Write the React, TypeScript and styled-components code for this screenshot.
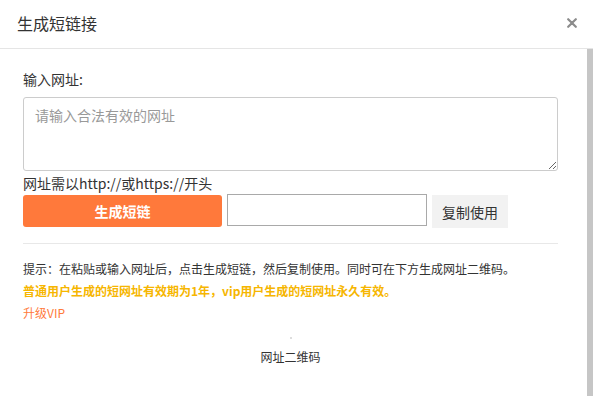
import styled, { createGlobalStyle } from "styled-components"

const GlobalStyle = createGlobalStyle`
  html, body {
    margin: 0;
    padding: 0;
    background: #fff;
    overflow: hidden;
  }
  body {
    font-family: "Noto Sans CJK SC", "Noto Sans", "Liberation Sans", sans-serif;
    color: #333;
  }
  * {
    box-sizing: border-box;
  }
`

const ModalWrapper = styled.div`
  width: 100vw;
  height: 100vh;
  background-color: #fff;
  display: flex;
  flex-direction: column;
  overflow: hidden;
`

const ModalHeader = styled.div`
  height: 49px;
  flex-shrink: 0;
  display: flex;
  align-items: center;
  justify-content: space-between;
  padding: 0 15px 2px 17px;
  border-bottom: 1px solid #e5e5e5;
`

const Title = styled.h3`
  margin: 0;
  font-size: 16px;
  font-weight: normal;
  color: #333;
`

const CloseButton = styled.button`
  width: 12px;
  height: 12px;
  padding: 0;
  border: none;
  background: none;
  cursor: pointer;
  display: flex;
  align-items: center;
  justify-content: center;
`

const BodyFrame = styled.div`
  flex: 1;
  min-height: 0;
  display: grid;
  grid-template-columns: 1fr 6px;
`

const ModalBody = styled.div`
  overflow: hidden;
  padding: 20px 29px 0 23px;
`

const ScrollThumb = styled.div`
  height: 100%;
  background-color: #c6c6c6;
`

const Label = styled.div`
  font-size: 14px;
  line-height: 20px;
  color: #333;
`

const UrlTextarea = styled.textarea`
  display: block;
  width: 100%;
  height: 74px;
  margin: 8px 0 2px;
  padding: 7px 11px;
  border: 1px solid #ccc;
  border-radius: 3px;
  font-family: inherit;
  font-size: 14px;
  line-height: 20px;
  color: #333;
  outline: none;

  &::placeholder {
    color: #999;
  }
`

const ActionRow = styled.div`
  display: flex;
  align-items: flex-start;
  gap: 5px;
  margin-top: 1px;
`

const GenerateButton = styled.button`
  width: 199px;
  height: 32px;
  margin-top: 1px;
  border: none;
  border-radius: 3px;
  background-color: #ff793b;
  color: #fff;
  font-family: inherit;
  font-size: 14px;
  font-weight: bold;
  cursor: pointer;
`

const ResultInput = styled.input`
  width: 200px;
  height: 32px;
  border: 1px solid #a9a9a9;
  padding: 0 6px;
  font-family: inherit;
  font-size: 13px;
  outline: none;
`

const CopyButton = styled.button`
  width: 76px;
  height: 33px;
  margin-top: 1px;
  border: none;
  background-color: #f2f2f2;
  color: #333;
  font-family: inherit;
  font-size: 14px;
  cursor: pointer;
`

const Divider = styled.div`
  height: 1px;
  margin: 15px 0 14px;
  background-color: #e8e8e8;
`

const Tip = styled.p<{ tone?: "normal" | "warn" | "vip" }>`
  margin: 0;
  font-size: 12px;
  line-height: 22px;
  color: ${(props) =>
    props.tone === "warn" ? "#f6b600" : props.tone === "vip" ? "#ff7a3b" : "#333"};
  font-weight: ${(props) => (props.tone === "warn" ? "bold" : "normal")};
`

const QrBox = styled.div`
  display: flex;
  flex-direction: column;
  align-items: center;
  margin-top: 13px;
`

const QrImage = styled.div`
  width: 2px;
  height: 2px;
  background-color: #ddd;
`

const QrCaption = styled.div`
  margin-top: 8px;
  font-size: 12px;
  line-height: 20px;
  color: #333;
`

const App = () => {
  return (
    <>
      <GlobalStyle />
      <ModalWrapper>
        <ModalHeader>
          <Title>生成短链接</Title>
          <CloseButton aria-label="关闭">
            <svg width="10" height="10" viewBox="0 0 10 10">
              <path d="M1.2 1.2 L8.8 8.8 M8.8 1.2 L1.2 8.8" stroke="#8c8c8c" strokeWidth="2.2" strokeLinecap="round" />
            </svg>
          </CloseButton>
        </ModalHeader>
        <BodyFrame>
          <ModalBody>
            <Label>输入网址:</Label>
            <UrlTextarea placeholder="请输入合法有效的网址" />
            <Label>网址需以http://或https://开头</Label>
            <ActionRow>
              <GenerateButton>生成短链</GenerateButton>
              <ResultInput type="text" />
              <CopyButton>复制使用</CopyButton>
            </ActionRow>
            <Divider />
            <Tip>提示：在粘贴或输入网址后，点击生成短链，然后复制使用。同时可在下方生成网址二维码。</Tip>
            <Tip tone="warn">普通用户生成的短网址有效期为1年，vip用户生成的短网址永久有效。</Tip>
            <Tip tone="vip">升级VIP</Tip>
            <QrBox>
              <QrImage />
              <QrCaption>网址二维码</QrCaption>
            </QrBox>
          </ModalBody>
          <ScrollThumb />
        </BodyFrame>
      </ModalWrapper>
    </>
  )
}

export default App
